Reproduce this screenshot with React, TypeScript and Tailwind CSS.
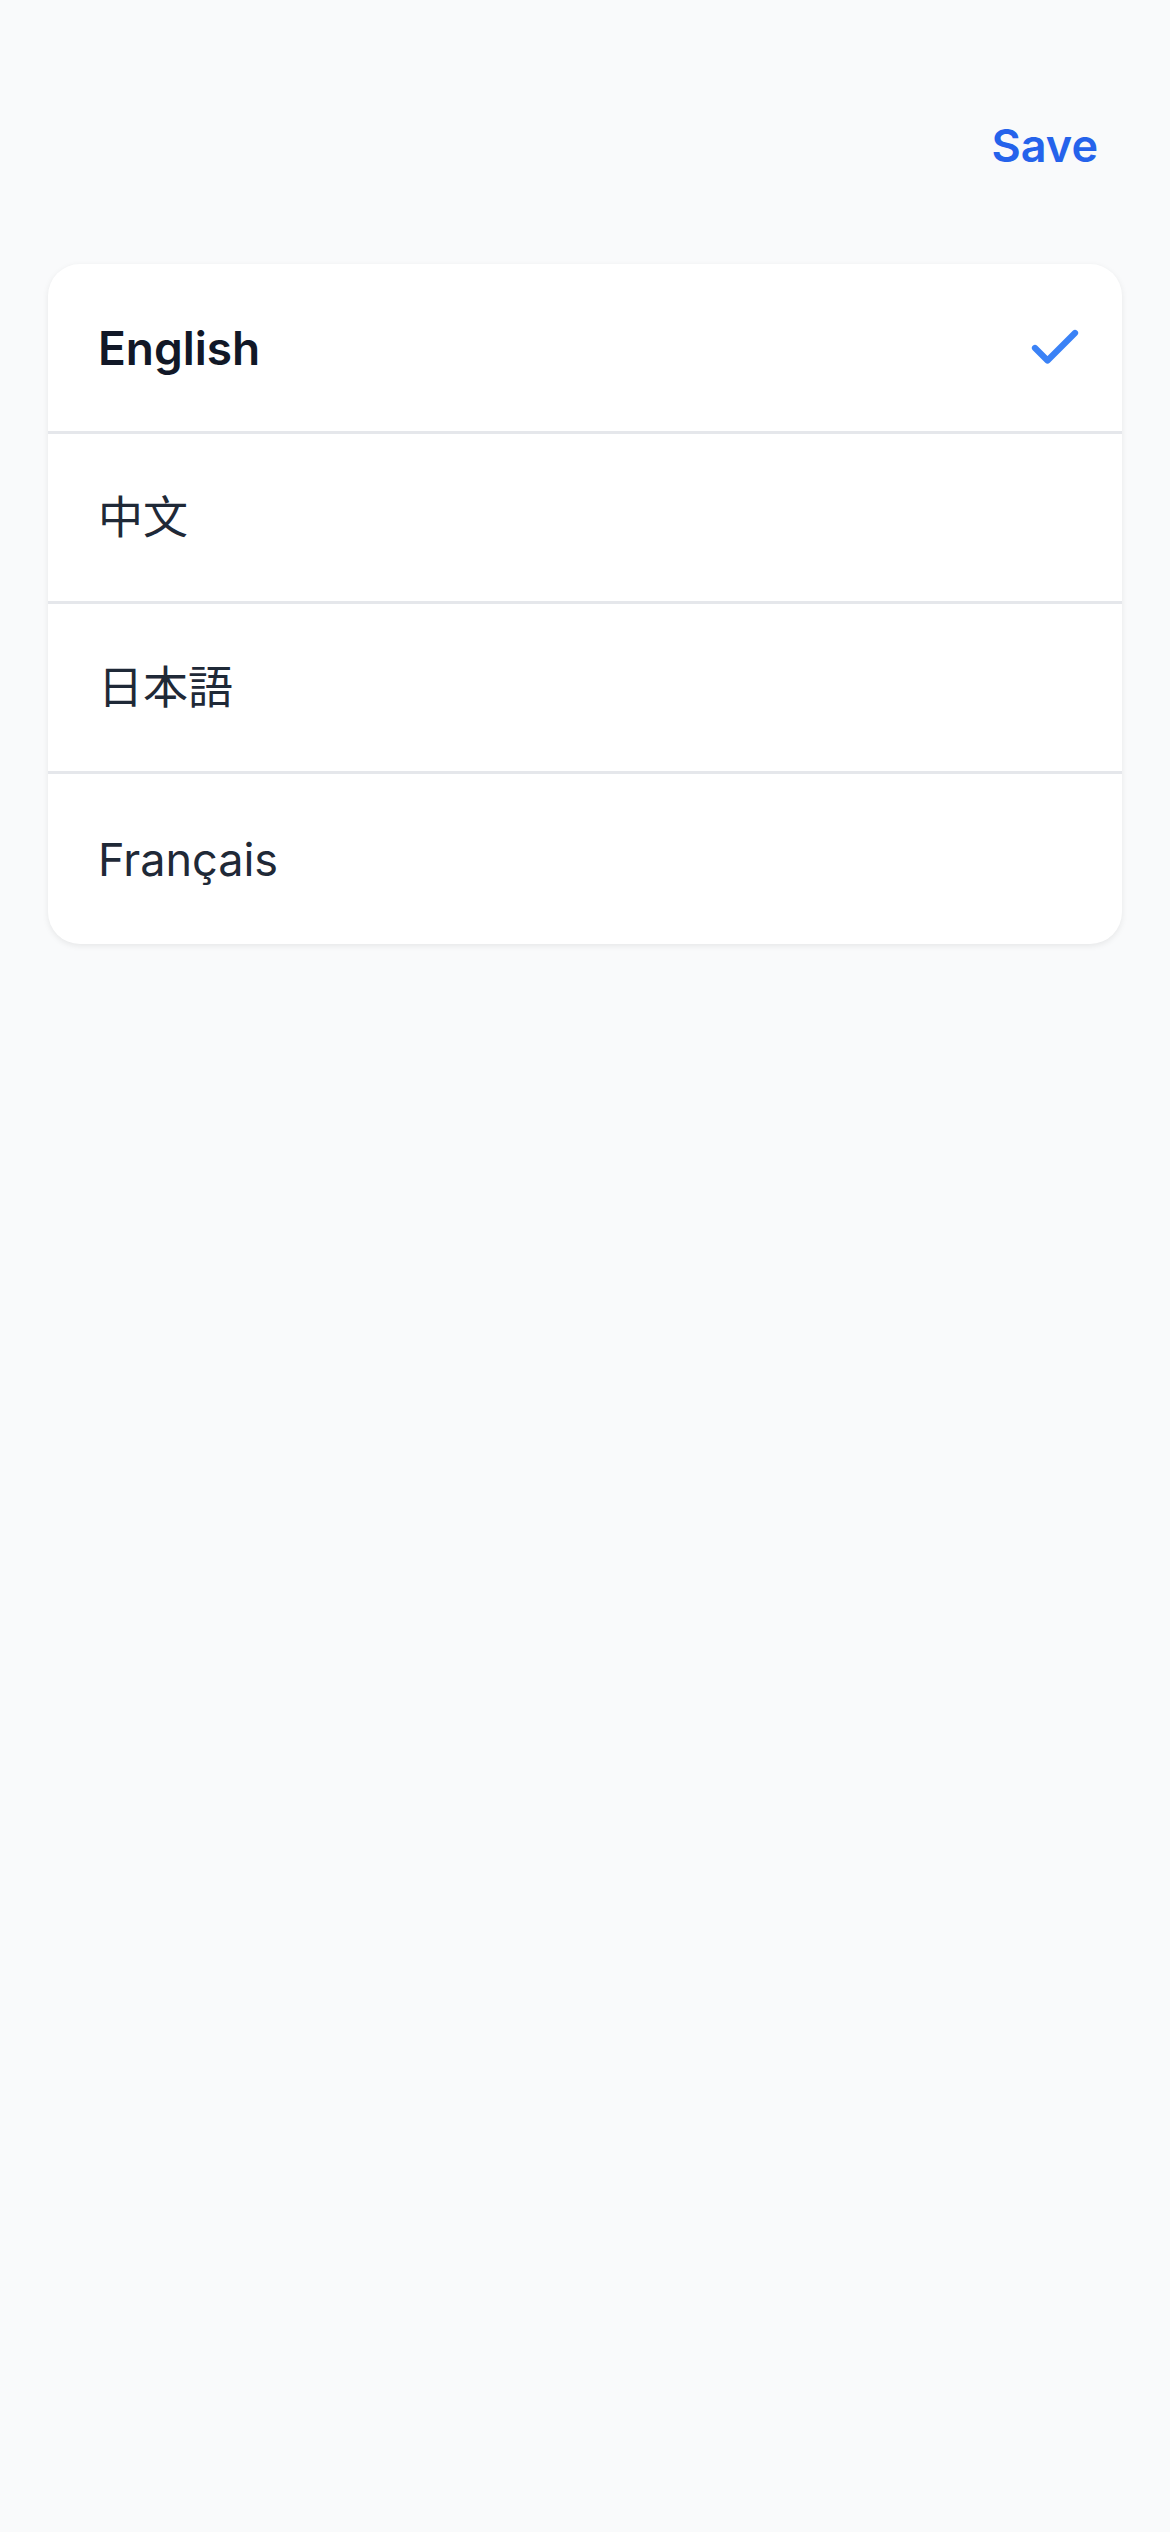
import React from "react";

const langs = [
  { label: "English", selected: true, font: "font-['Inter','Noto_Sans',sans-serif]" },
  { label: "中文", selected: false, font: "font-['Inter','Noto_Sans_CJK_SC',sans-serif]" },
  { label: "日本語", selected: false, font: "font-['Inter','Noto_Sans_CJK_JP',sans-serif]" },
  { label: "Français", selected: false, font: "font-['Inter','Noto_Sans',sans-serif]" },
];

export default function App() {
  return (
    <div className="min-h-[2532px] w-full bg-[#f9fafb] pt-[60px] font-['Inter','Noto_Sans',sans-serif]">
      <div className="flex h-[170px] items-center justify-end px-[48px]">
        <button className="px-[24px] text-[45px] font-semibold text-[#2563eb] leading-none">Save</button>
      </div>
      <div className="mx-[48px] mt-[34px] overflow-hidden rounded-[32px] bg-white shadow-[0_2px_6px_rgba(0,0,0,0.08)]">
        {langs.map((l, i) => (
          <div
            key={l.label}
            className={`flex h-[170px] items-center justify-between pl-[50px] pr-[37px] ${
              i < langs.length - 1 ? "border-b-[3px] border-[#e5e7eb]" : ""
            }`}
          >
            <span
              className={`${l.font} leading-none ${
                l.selected ? "text-[46px] font-semibold text-[#111827]" : "text-[45px] font-normal text-[#1f2937]"
              }`}
            >
              {l.label}
            </span>
            {l.selected && (
              <svg width="60" height="60" viewBox="0 0 24 24" fill="none" stroke="#3b82f6" strokeWidth="2.5" strokeLinecap="round" strokeLinejoin="round">
                <path d="M20 6 9 17l-5-5" />
              </svg>
            )}
          </div>
        ))}
      </div>
    </div>
  );
}
